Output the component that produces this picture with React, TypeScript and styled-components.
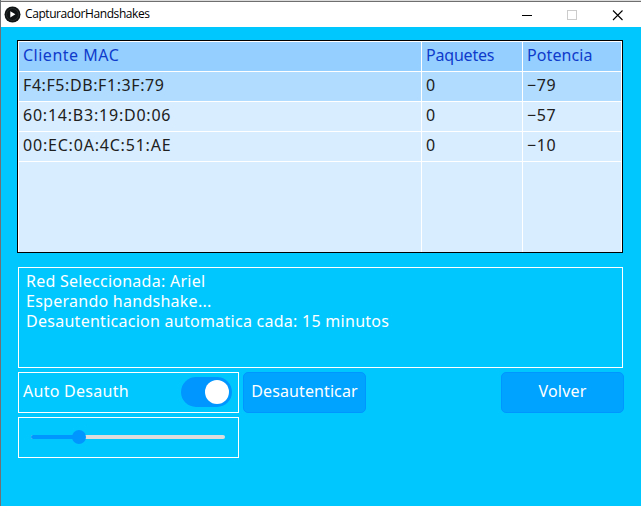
import React from "react";
import styled, { createGlobalStyle } from "styled-components";

const GlobalStyle = createGlobalStyle`
  * { box-sizing: border-box; }
  body { margin: 0; overflow: hidden; }
`;

const Window = styled.div`
  width: 641px;
  height: 506px;
  background: #00c8ff;
  border-left: 1px solid #6f7274;
  font-family: "Noto Sans", "Open Sans", sans-serif;
  font-size: 16px;
  line-height: 20px;
`;

const TitleBar = styled.header`
  display: flex;
  align-items: center;
  height: 27px;
  padding: 1px 0 0 3px;
  background: #fff;
  border-top: 1px solid #dcdcdc;
  box-shadow: inset 0 1px #6f6f6f;
`;

const Title = styled.span`
  flex: 1;
  padding: 0 0 1px 4px;
  font: 12px/16px "Open Sans", "Noto Sans", sans-serif;
  letter-spacing: -0.42px;
  color: #000;
`;

const WindowControls = styled.svg`
  display: block;
  width: 120px;
  height: 24px;
`;

const Content = styled.main`
  display: flex;
  flex-direction: column;
  padding: 13px 17px 0 16px;
`;

const Label = styled.span<{ $spacing?: number }>`
  white-space: pre;
  letter-spacing: ${(p) => p.$spacing ?? 0}px;
`;

const Table = styled.div`
  display: grid;
  grid-template-columns: 404px 101px 99px;
  grid-template-rows: 30px 30px 30px 30px 1fr;
  width: 606px;
  height: 213px;
  border: 1px solid #000;
  background: #d8edff;
  padding-top: 1px;
  box-shadow: inset 0 1px #fff;
`;

const tones = { header: "#94cfff", selected: "#b1dcff", plain: "#d8edff" };

const Cell = styled.div<{ $tone: keyof typeof tones }>`
  padding: 3px 0 0 4px;
  border-right: 1px solid #fff;
  border-bottom: 1px solid #fff;
  background: ${(p) => tones[p.$tone]};
  color: ${(p) => (p.$tone === "header" ? "#0f3bcb" : "#202020")};
  &:nth-child(3n + 1) {
    border-left: 1px solid #fff;
  }
  &:nth-last-child(-n + 3) {
    border-bottom: 0;
  }
`;

const Status = styled.section`
  display: flex;
  flex-direction: column;
  width: 605px;
  height: 101px;
  margin: 14px 0 4px 1px;
  padding: 3px 7px;
  border: 1px solid #fff;
  color: #fff;
`;

const Controls = styled.div`
  display: grid;
  grid-template-columns: 221px 123px 1fr;
  grid-template-rows: 41px 41px;
  gap: 4px;
  width: 606px;
  margin-left: 1px;
`;

const ControlBox = styled.div`
  display: flex;
  align-items: flex-start;
  justify-content: space-between;
  padding: 4px 6px 0 4px;
  border: 1px solid #fff;
  color: #fff;
  line-height: 28px;
`;

const Toggle = styled.div`
  display: flex;
  justify-content: flex-end;
  width: 51px;
  height: 30px;
  padding: 3px;
  border-radius: 15px;
  background: #0096ff;
`;

const Knob = styled.div`
  width: 24px;
  height: 24px;
  border-radius: 50%;
  background: #fff;
`;

const Button = styled.button<{ $end?: boolean }>`
  width: 123px;
  height: 41px;
  padding: 0 0 3px;
  justify-self: ${(p) => (p.$end ? "end" : "start")};
  border: 1px solid #0096ff;
  border-radius: 5px;
  background: #00a3ff;
  color: #fff;
  font: inherit;
`;

const SliderDrawing = styled.svg`
  display: block;
  width: 219px;
  height: 39px;
`;

const SliderBox = styled.div`
  border: 1px solid #fff;
`;

type Entry = { text: string; spacing?: number };

const rows: Entry[][] = [
  [
    { text: "Cliente MAC", spacing: 0.5 },
    { text: "Paquetes", spacing: -0.2 },
    { text: "Potencia", spacing: 0.1 },
  ],
  [
    { text: "F4:F5:DB:F1:3F:79", spacing: 0.58 },
    { text: "0" },
    { text: "−79", spacing: 0.6 },
  ],
  [
    { text: "60:14:B3:19:D0:06", spacing: 0.78 },
    { text: "0" },
    { text: "−57", spacing: 0.6 },
  ],
  [
    { text: "00:EC:0A:4C:51:AE", spacing: 0.8 },
    { text: "0" },
    { text: "−10", spacing: 0.6 },
  ],
  [{ text: "" }, { text: "" }, { text: "" }],
];

const messages: Entry[] = [
  { text: "Red Seleccionada: Ariel", spacing: 0.26 },
  { text: "Esperando handshake...", spacing: 0.26 },
  { text: "Desautenticacion automatica cada: 15 minutos", spacing: 0.27 },
];

export default function App() {
  return (
    <>
      <GlobalStyle />
      <Window>
        <TitleBar>
          <svg width="17" height="17" viewBox="0 0 17 17">
            <circle cx="8.5" cy="8.5" r="8" fill="#101314" />
            <circle cx="8.5" cy="8.5" r="6" fill="none" stroke="#292d2e" />
            <path d="M6.3 5.2 11.4 8.3 6.3 11.4Z" fill="#fff" />
          </svg>
          <Title>CapturadorHandshakes</Title>
          <WindowControls viewBox="521 2 120 24" shapeRendering="crispEdges">
            <path d="M522 14.5H532" stroke="#000" />
            <rect x="567.5" y="9.5" width="9" height="9" fill="none" stroke="#ccc" />
            <path
              d="M613 9.5 622.5 19M622.5 9.5 613 19"
              stroke="#000"
              strokeWidth="1.1"
              shapeRendering="auto"
            />
          </WindowControls>
        </TitleBar>
        <Content>
          <Table>
            {rows.map((row, r) =>
              row.map((cell, c) => (
                <Cell
                  key={`${r}-${c}`}
                  $tone={r === 0 ? "header" : r === 1 ? "selected" : "plain"}
                >
                  <Label $spacing={cell.spacing}>{cell.text}</Label>
                </Cell>
              )),
            )}
          </Table>
          <Status>
            {messages.map((m) => (
              <Label key={m.text} $spacing={m.spacing}>
                {m.text}
              </Label>
            ))}
          </Status>
          <Controls>
            <ControlBox>
              <Label $spacing={0.27}>Auto Desauth</Label>
              <Toggle>
                <Knob />
              </Toggle>
            </ControlBox>
            <Button>
              <Label $spacing={0.1}>Desautenticar</Label>
            </Button>
            <Button $end>
              <Label $spacing={0.2}>Volver</Label>
            </Button>
            <SliderBox>
              <SliderDrawing viewBox="19 418 219 39">
                <rect x="31" y="435" width="194" height="4" rx="2" fill="#dcdcdc" />
                <rect x="31" y="435" width="48" height="4" rx="2" fill="#0096ff" />
                <circle cx="79" cy="437" r="7" fill="#0096ff" />
              </SliderDrawing>
            </SliderBox>
          </Controls>
        </Content>
      </Window>
    </>
  );
}
